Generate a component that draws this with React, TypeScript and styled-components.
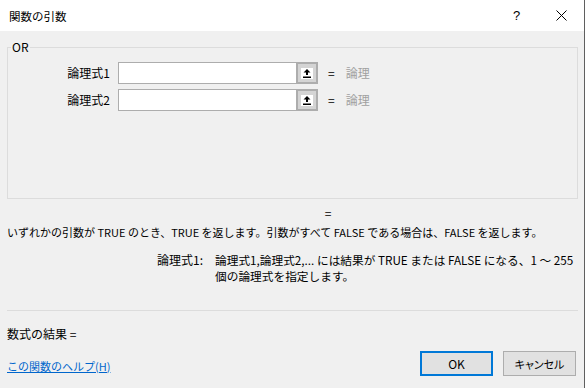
import React from "react";
import styled, { createGlobalStyle } from "styled-components";

const Global = createGlobalStyle`
  html, body { margin: 0; padding: 0; background: #f0f0f0; }
  body {
    font-family: "Noto Sans CJK JP", "Noto Sans", sans-serif;
    font-size: 12px;
    color: #000;
  }
`;

const Dialog = styled.div`
  width: 585px;
  height: 388px;
  box-sizing: border-box;
  display: flex;
  flex-direction: column;
  background: #f0f0f0;
  border-right: 1px solid #5f5f5f;
  overflow: hidden;
`;

const TitleBar = styled.div`
  height: 31px;
  flex: none;
  display: flex;
  align-items: center;
  background: #fff;
  padding-left: 9px;
`;

const Title = styled.div`
  flex: 1;
  font-size: 11.5px;
  line-height: 16px;
`;

const TitleButton = styled.div`
  width: 45px;
  height: 31px;
  display: flex;
  align-items: center;
  justify-content: center;
  font-family: "Liberation Sans", sans-serif;
  font-size: 13px;
`;

const Body = styled.div`
  flex: 1;
  display: flex;
  flex-direction: column;
  padding: 0 6px 0 7px;
`;

const Group = styled.fieldset`
  margin: 9px 0 0 0;
  height: 159px;
  box-sizing: border-box;
  border: 1px solid #dcdcdc;
  padding: 8px 0 0 0;
  min-width: 0;
`;

const Legend = styled.legend`
  padding: 0 1px;
  margin-left: 3px;
  font-size: 12px;
  line-height: 14px;
`;

const ArgRows = styled.div`
  display: grid;
  grid-template-columns: 102px 198px auto auto;
  justify-content: start;
  column-gap: 10px;
  row-gap: 5px;
  align-items: center;
`;

const ArgLabel = styled.div`
  text-align: right;
  line-height: 16px;
`;

const InputWrap = styled.div`
  display: flex;
  height: 22px;
  margin-left: -2px;
`;

const Input = styled.div`
  flex: 1;
  box-sizing: border-box;
  background: #fff;
  border: 1px solid #adadad;
  border-right: none;
`;

const RefButton = styled.div`
  width: 22px;
  height: 22px;
  box-sizing: border-box;
  border: 2px solid #adadad;
  background: #d4d4d4;
  display: flex;
  align-items: center;
  justify-content: center;
`;

const RefIcon = styled.div`
  width: 12px;
  height: 11px;
  background: #fff;
  display: flex;
  align-items: center;
  justify-content: center;
`;

const Eq = styled.div`
  line-height: 16px;
`;

const Value = styled.div`
  color: #a0a0a0;
  line-height: 16px;
  margin-left: 1px;
`;

const CenterEq = styled.div`
  margin-top: 6px;
  line-height: 16px;
  text-align: center;
  padding-left: 71px;
`;

const Description = styled.div`
  margin-top: 3px;
  font-size: 11px;
  line-height: 16px;
  white-space: nowrap;
`;

const ArgHelp = styled.div`
  margin-top: 12px;
  display: grid;
  grid-template-columns: 196px 1fr;
  column-gap: 12px;
  font-size: 11.7px;
  line-height: 16px;
`;

const ArgHelpLabel = styled.div`
  text-align: right;
  font-size: 12px;
`;

const ArgHelpText = styled.div`
  white-space: nowrap;
`;

const Separator = styled.div`
  margin-top: 26px;
  height: 1px;
  background: #dcdcdc;
`;

const Result = styled.div`
  margin-top: 15px;
  line-height: 16px;
`;

const Footer = styled.div`
  margin-top: 9px;
  display: flex;
  align-items: center;
  gap: 10px;
  padding-right: 2px;
`;

const HelpLink = styled.a`
  flex: 1;
  color: #0066cc;
  font-size: 11px;
  text-decoration: underline;
  line-height: 16px;
  margin-top: 4px;
`;

const Button = styled.button<{ $primary?: boolean }>`
  width: 73px;
  height: 25px;
  box-sizing: border-box;
  background: #e1e1e1;
  border: ${(p) => (p.$primary ? "2px solid #0078d7" : "1px solid #adadad")};
  font-family: inherit;
  font-feature-settings: "palt";
  font-size: ${(p) => (p.$primary ? "12px" : "11px")};
  color: #000;
  padding: 0;
`;

const rows = ["論理式1", "論理式2"];

export default function App() {
  return (
    <>
      <Global />
      <Dialog>
        <TitleBar>
          <Title>関数の引数</Title>
          <TitleButton>?</TitleButton>
          <TitleButton>
            <svg width="11" height="11" viewBox="0 0 11 11">
              <path d="M0.5 0.5 L10.5 10.5 M10.5 0.5 L0.5 10.5" stroke="#000" strokeWidth="1" fill="none" />
            </svg>
          </TitleButton>
        </TitleBar>
        <Body>
          <Group>
            <Legend>OR</Legend>
            <ArgRows>
              {rows.map((r) => (
                <React.Fragment key={r}>
                  <ArgLabel>{r}</ArgLabel>
                  <InputWrap>
                    <Input />
                    <RefButton>
                      <RefIcon>
                        <svg width="8" height="9" viewBox="0 0 8 9">
                          <path d="M4 0 L7.5 3.5 L5 3.5 L5 6 L3 6 L3 3.5 L0.5 3.5 Z" fill="#000" />
                          <rect x="0" y="7.5" width="8" height="1.5" fill="#000" />
                        </svg>
                      </RefIcon>
                    </RefButton>
                  </InputWrap>
                  <Eq>=</Eq>
                  <Value>論理</Value>
                </React.Fragment>
              ))}
            </ArgRows>
          </Group>
          <CenterEq>=</CenterEq>
          <Description>
            いずれかの引数が TRUE のとき、TRUE を返します。引数がすべて FALSE である場合は、FALSE を返します。
          </Description>
          <ArgHelp>
            <ArgHelpLabel>論理式1:</ArgHelpLabel>
            <ArgHelpText>
              論理式1,論理式2,... には結果が TRUE または FALSE になる、1 ～ 255
              <br />
              個の論理式を指定します。
            </ArgHelpText>
          </ArgHelp>
          <Separator />
          <Result>数式の結果 =</Result>
          <Footer>
            <HelpLink href="#">この関数のヘルプ(H)</HelpLink>
            <Button $primary>OK</Button>
            <Button>キャンセル</Button>
          </Footer>
        </Body>
      </Dialog>
    </>
  );
}
